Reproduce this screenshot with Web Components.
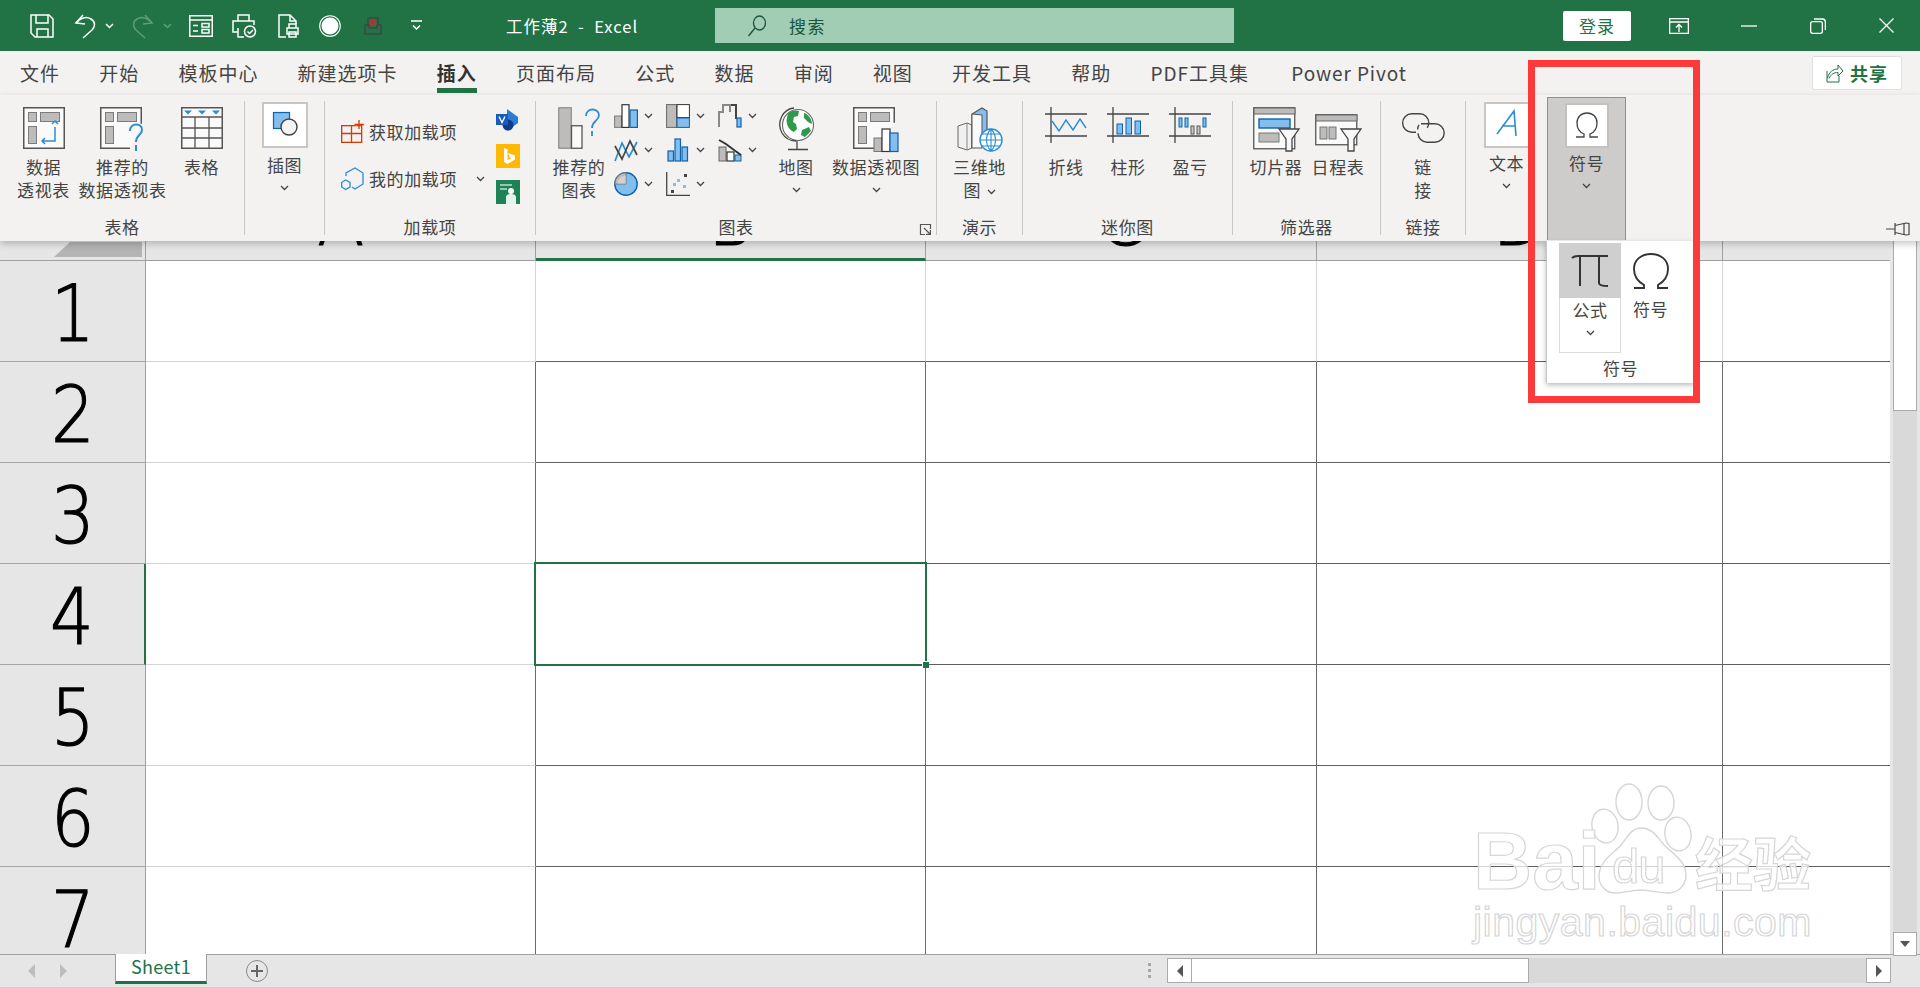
<!DOCTYPE html>
<html lang="zh">
<head>
<meta charset="utf-8">
<title>工作薄2 - Excel</title>
<style>
  html, body { margin: 0; padding: 0; height: 988px; overflow: hidden; }
  body {
    position: relative;
    width: 1920px;
    display: flex;
    flex-direction: column;
    background: #f3f2f1;
    color: #444;
    font-family: "Noto Sans CJK SC", "Liberation Sans", sans-serif;
  }
</style>
</head>
<body>
  <xl-titlebar></xl-titlebar>
  <xl-tabs></xl-tabs>
  <xl-ribbon>
    <xl-group label="表格" width="245" pad="4">
      <xl-btn w="79" label="数据|透视表"><xl-icon name="pivot"></xl-icon></xl-btn>
      <xl-btn w="79" label="推荐的|数据透视表"><xl-icon name="recpivot"></xl-icon></xl-btn>
      <xl-btn w="79" label="表格"><xl-icon name="table"></xl-icon></xl-btn>
    </xl-group>
    <xl-group label="" width="80">
      <xl-btn w="79" label="插图" chev="block" top="52" pt="1"><xl-icon name="illus"></xl-icon></xl-btn>
    </xl-group>
    <xl-group label="加载项" width="211">
      <xl-addins></xl-addins>
    </xl-group>
    <xl-group label="图表" width="401" pad="8" launcher>
      <xl-btn w="70" label="推荐的|图表"><xl-icon name="recchart"></xl-icon></xl-btn>
      <xl-chart-grid></xl-chart-grid>
      <xl-btn w="52" label="地图" chev="block"><xl-icon name="globe"></xl-icon></xl-btn>
      <xl-btn w="108" label="数据透视图" chev="block"><xl-icon name="pivotchart"></xl-icon></xl-btn>
    </xl-group>
    <xl-group label="演示" width="86">
      <xl-btn w="85" label="三维地|图" chev="inline"><xl-icon name="map3d"></xl-icon></xl-btn>
    </xl-group>
    <xl-group label="迷你图" width="210" pad="12">
      <xl-btn w="62" label="折线"><xl-icon name="sparkline"></xl-icon></xl-btn>
      <xl-btn w="62" label="柱形"><xl-icon name="sparkbar"></xl-icon></xl-btn>
      <xl-btn w="62" label="盈亏"><xl-icon name="sparkwin"></xl-icon></xl-btn>
    </xl-group>
    <xl-group label="筛选器" width="148" pad="12">
      <xl-btn w="62" label="切片器"><xl-icon name="slicer"></xl-icon></xl-btn>
      <xl-btn w="62" label="日程表"><xl-icon name="timeline"></xl-icon></xl-btn>
    </xl-group>
    <xl-group label="链接" width="85">
      <xl-btn w="84" label="链|接"><xl-icon name="link"></xl-icon></xl-btn>
    </xl-group>
    <xl-group label="" width="81" plain>
      <xl-btn w="81" label="文本" chev="block" top="50" pt="1"><xl-icon name="textbox"></xl-icon></xl-btn>
    </xl-group>
    <xl-group label="" width="79" plain>
      <xl-btn w="79" label="符号" chev="block" top="50" pt="5" active><xl-icon name="omegabox"></xl-icon></xl-btn>
    </xl-group>
  </xl-ribbon>
  <xl-sheet></xl-sheet>
  <xl-sheetbar></xl-sheetbar>
  <xl-symbol-menu></xl-symbol-menu>
  <xl-callout></xl-callout>
  <xl-watermark></xl-watermark>

<script>
const GRAY = "#bdbcbb";
const LINE = "#555";
const BLUE = "#2a8dd4";
const SKY = "#83beec";
const DEEP = "#0f62ae";

// every icon is [width, height, svg content]
const ICONS = {
  save: [24, 24, `<g fill="none" stroke="#fff" stroke-width="1.5"><path d="M1 1h18l4 4v18H5l-4-4z"/><path d="M6 1v8h12V1M7 23v-8h11v8"/></g>`],
  undo: [22, 24, `<g fill="none" stroke="#fff" stroke-width="1.5"><path d="M9 1L2 9l9 1"/><path d="M2 9c4-5 10-7 15-4 5 3 4 8 1 11l-9 8"/></g>`],
  redo: [22, 24, `<g fill="none" stroke="#5f9c7c" stroke-width="1.5"><path d="M13 1l7 8-9 1"/><path d="M20 9C16 4 10 2 5 5 0 8 1 13 4 16l9 8"/></g>`],
  chevw: [9, 6, `<path d="M1 1l3.500 3.500L8 1" fill="none" stroke="#fff" stroke-width="1.500"/>`],
  chevd: [9, 6, `<path d="M1 1l3.500 3.500L8 1" fill="none" stroke="#5f9c7c" stroke-width="1.500"/>`],
  form: [24, 22, `<g fill="none" stroke="#fff" stroke-width="1.500"><rect x=".75" y=".75" width="22.500" height="20.500"/><path d="M1 5h22M4 10.500h5M4 16h5"/><rect x="13" y="8.500" width="7" height="3.500"/><rect x="13" y="14.500" width="7" height="3.500"/></g>`],
  printchk: [24, 24, `<g fill="none" stroke="#fff" stroke-width="1.500"><path d="M6 7V1h11v6M6 18H1V7h21v4"/><path d="M6 14v9h6"/><circle cx="18" cy="17.500" r="5.500"/><path d="M15.500 17.500l2 2 3.500-3.500"/></g>`],
  preview: [21, 24, `<g fill="none" stroke="#fff" stroke-width="1.500"><path d="M8 23H1V1h11l6 6v3M12 1v6h6"/><path d="M9 14h11v6H9zM11 14v-4h7v4M11 18h7v5h-7z"/></g>`],
  circle: [22, 22, `<circle cx="11" cy="11" r="10.300" fill="none" stroke="#fff" stroke-width="1.100"/><circle cx="11" cy="11" r="8.500" fill="#fff"/>`],
  record: [18, 18, `<g fill="none" stroke="#3d4a45" stroke-width="1.500"><path d="M4 8V1h10v7"/><path d="M1 8h4v3h8V8h4v9H1z"/></g><circle cx="9" cy="6" r="2.500" fill="none" stroke="#e0202c" stroke-width="1.500"/>`],
  qatmore: [11, 11, `<path d="M0 1h11M2 5.500l3.500 3.500L9 5.500" fill="none" stroke="#fff" stroke-width="1.500"/>`],
  search: [20, 22, `<g fill="none" stroke="#17563a" stroke-width="1.300"><ellipse cx="12.500" cy="8" rx="6" ry="7"/><path d="M8 13L1.500 21"/></g>`],
  ribbonopt: [20, 16, `<g fill="none" stroke="#fff" stroke-width="1.300"><rect x=".65" y=".65" width="18.700" height="14.700"/><path d="M1 4h18M10 14V7M7 9.500L10 6.500l3 3"/></g>`],
  minimize: [16, 2, `<path d="M0 1h16" stroke="#fff" stroke-width="1.300"/>`],
  restore: [16, 16, `<g fill="none" stroke="#fff" stroke-width="1.300"><rect x=".65" y="3.650" width="11.700" height="11.700" rx="2"/><path d="M4 1h8.500A3 3 0 0 1 15.350 4v8"/></g>`],
  close: [15, 15, `<path d="M.5.500l14 14M14.500.500l-14 14" stroke="#fff" stroke-width="1.300"/>`],
  share: [18, 20, `<g fill="none" stroke="#217346" stroke-width="1"><path d="M1 8v11h12v-6"/><path d="M1.500 15C3 9 7 6 12 6V2l5 6-5 5V9.500c-4 0-7 1.500-9 6"/></g>`],
  pin: [24, 14, `<g fill="none" stroke="#444" stroke-width="1.200"><path d="M0 7h9M9 1v12M9 3.500l11-2.500 3 .5v11l-3 .5-11-2.500"/><path d="M18 1v12"/></g>`],
  launcher: [11, 11, `<g fill="none" stroke="#555" stroke-width="1.200"><path d="M10.500 5V.5H.5v10H5"/><path d="M4 4l6 6M6 10.400h4.400V6"/></g>`],

  pivot: [42, 42, `<rect x=".75" y=".75" width="40.500" height="40.500" fill="#fafafa" stroke="${LINE}" stroke-width="1.500"/><g fill="${GRAY}" stroke="#7c7c7c"><rect x="5.500" y="5.500" width="8" height="9"/><rect x="17.500" y="5.500" width="19" height="9"/><rect x="5.500" y="19.500" width="8" height="17"/></g><path d="M19 34h13V20M29 17l3-3 3 3M22 31l-3 3 3 3" fill="none" stroke="${BLUE}" stroke-width="1.500"/>`],
  recpivot: [46, 45, `<path d="M30 41.250H.75V.75h40.500v16" fill="#fafafa" stroke="${LINE}" stroke-width="1.500"/><g fill="${GRAY}" stroke="#7c7c7c"><rect x="5.500" y="5.500" width="8" height="9"/><rect x="17.500" y="5.500" width="19" height="9"/><rect x="5.500" y="19.500" width="8" height="17"/></g><path d="M30 24c0-9 13-8 12-1 0 5-6 5-6 12M36 38v6" fill="none" stroke="${BLUE}" stroke-width="2"/>`],
  table: [42, 42, `<rect x=".75" y=".75" width="40.500" height="40.500" fill="#fafafa" stroke="${LINE}" stroke-width="1.500"/><path d="M1 10h40M1 21h40M1 31h40M14 10v31M28 10v31" fill="none" stroke="${LINE}" stroke-width="1.300"/><path d="M3 3.500h8l-4 4zM17 3.500h8l-4 4zM31 3.500h8l-4 4z" fill="${BLUE}"/>`],
  illus: [46, 46, `<rect x="1" y="1" width="44" height="44" fill="#fff" stroke="#c8c6c4" stroke-width="2"/><rect x="11.500" y="10.500" width="16" height="16" fill="${SKY}" stroke="${DEEP}" stroke-width="1.200"/><circle cx="27" cy="25" r="8" fill="#f4f4f4" stroke="#444" stroke-width="1.400"/>`],
  addget: [23, 23, `<g fill="none" stroke="#d83b01" stroke-width="1.300"><rect x=".65" y="5.650" width="20" height="16.700"/><path d="M10.500 6v16M1 13.500h19"/></g><path d="M12 5.500h2.500V0h1.300v2.500H23v1.300h-7.200v1.700z" fill="#f3f2f1"/><path d="M18 0v9M13.500 4.500H23" stroke="#d83b01" stroke-width="1.300"/>`],
  addmine: [23, 23, `<g fill="none" stroke="${BLUE}" stroke-width="1.300"><path d="M5 9V6L14 1l8 5v11l-8 5-3-2"/><path d="M4.500 13L9 15.500v4.500l-4.500 2.500L.7 20v-4.500z"/></g><path d="M7 11.500" stroke="#333"/>`],
  visio: [24, 23, `<path d="M11 1l11 8v6l-11 8z" fill="#2b7cd3"/><circle cx="12" cy="17" r="5.500" fill="#0e3c8c"/><rect x="0" y="6" width="12" height="11" fill="#185abd"/><path d="M3 8.500l3 6 3-6" fill="none" stroke="#fff" stroke-width="1.400"/>`],
  bing: [24, 24, `<rect width="24" height="24" fill="#ffb900"/><path d="M8 4l3.500 1.200v11l4-2.300-2-1L12 9l7 2.500v4L11.500 20 8 18z" fill="#fff"/>`],
  people: [24, 24, `<rect width="24" height="24" fill="#1e8257"/><path d="M4 5h12M4 9h7" stroke="#bde0cd" stroke-width="1.500"/><circle cx="15" cy="11" r="3" fill="#fff"/><path d="M10 24v-7c0-2 2-3 5-3s5 1 5 3v7z" fill="#e6f3ec"/>`],

  recchart: [43, 42, `<rect x=".75" y=".75" width="12.500" height="40.500" fill="${GRAY}" stroke="#7c7c7c"/><rect x="13.500" y="18.750" width="10.500" height="22.500" fill="#fafafa" stroke="${LINE}" stroke-width="1.300"/><path d="M28 9c0-9 13-8 13-1 0 6-7 6-7 13M34 24v5" fill="none" stroke="${BLUE}" stroke-width="1.800"/>`],
  column: [24, 24, `<rect x=".6" y="12" width="7" height="11.400" fill="${GRAY}" stroke="#7c7c7c"/><rect x="8" y=".7" width="7" height="22.700" fill="#fff" stroke="#333" stroke-width="1.200"/><rect x="16" y="6" width="7.400" height="17.400" fill="${SKY}" stroke="${DEEP}" stroke-width="1.200"/>`],
  hier: [24, 24, `<rect x=".6" y=".6" width="10" height="22.800" fill="${GRAY}" stroke="#666"/><rect x="11" y=".6" width="12.400" height="13" fill="#fff" stroke="#333"/><rect x="11" y="14" width="12.400" height="9.400" fill="${SKY}" stroke="${DEEP}"/>`],
  water: [24, 24, `<path d="M1 23V8h4V1h7v7" fill="none" stroke="#888" stroke-width="2"/><path d="M13 1h5v14" fill="none" stroke="#444" stroke-width="2"/><rect x="19" y="14" width="4" height="9" fill="${SKY}" stroke="${DEEP}" stroke-width="1.200"/>`],
  line: [24, 24, `<path d="M1 23L8 5l7 14 8-15" fill="none" stroke="${BLUE}" stroke-width="1.700"/><path d="M1 8l7 13 8-18 7 14" fill="none" stroke="#444" stroke-width="1.700"/>`],
  stat: [24, 24, `<g fill="${SKY}" stroke="${DEEP}" stroke-width="1.200"><rect x="2" y="13" width="5.500" height="10"/><rect x="9" y="1" width="5.500" height="22"/><rect x="16" y="9" width="5.500" height="14"/></g>`],
  combo: [24, 24, `<rect x="1" y="9" width="7" height="14" fill="${GRAY}" stroke="#666"/><rect x="9" y="14" width="7" height="9" fill="#fff" stroke="#333" stroke-width="1.200"/><rect x="17" y="17" width="6" height="6" fill="${SKY}" stroke="${DEEP}"/><path d="M1 2l7 4 8 6 7 5" fill="none" stroke="#333" stroke-width="2"/>`],
  pie: [24, 24, `<circle cx="12" cy="12" r="11.200" fill="${SKY}" stroke="${DEEP}" stroke-width="1.400"/><path d="M12 .8A11.200 11.200 0 0 0 .8 12H12z" fill="${GRAY}" stroke="#777"/><path d="M12 3.500A8.500 8.500 0 0 0 3.500 12H12z" fill="#fafafa" opacity=".35"/>`],
  scatter: [24, 24, `<path d="M.7 0v23.300H24" fill="none" stroke="#444" stroke-width="1.300"/><g fill="${SKY}"><rect x="11" y="7" width="3" height="3"/><rect x="7" y="11" width="3" height="3"/><rect x="17" y="13" width="3" height="3"/></g><g fill="#444"><rect x="18" y="2" width="3" height="3"/><rect x="5" y="18" width="3" height="3"/></g>`],
  globe: [37, 44, `<circle cx="20" cy="18" r="15.500" fill="#fff" stroke="#666" stroke-width="1.100"/><path d="M10 6c4-3 9-3 11-2l-1 5-4 1-1 5 3 2 1 5-3 3c-4-1-9-8-7-14zM26 6c4 1 8 6 8 11l-4-2-4-4zM24 23l7-3 2 4-6 6-4-2z" fill="#2f9a4a"/><path d="M16 1C5 2-2 15 4 26c3 5 8 8 14 8M19 34v8M10 42.500h20" fill="none" stroke="#444" stroke-width="1.300"/>`],
  pivotchart: [46, 45, `<path d="M24 41.250H.75V.75h40.500v15" fill="#fafafa" stroke="${LINE}" stroke-width="1.500"/><g fill="${GRAY}" stroke="#7c7c7c"><rect x="5.500" y="5.500" width="8" height="9"/><rect x="17.500" y="5.500" width="19" height="9"/><rect x="5.500" y="19.500" width="8" height="17"/></g><rect x="21" y="31" width="8" height="13.500" fill="${GRAY}" stroke="#777"/><rect x="29" y="22" width="8" height="22.500" fill="#fff" stroke="#333" stroke-width="1.200"/><rect x="37" y="26" width="8" height="18.500" fill="${SKY}" stroke="${DEEP}" stroke-width="1.200"/>`],
  map3d: [46, 45, `<path d="M1 19l9-3 5 2v23l-5 2-9-3z" fill="#f0f0f0" stroke="#666"/><path d="M10 16v27" stroke="#888"/><path d="M15 41V7l10-6 5 3v30" fill="${SKY}" stroke="#555" stroke-width="1.200"/><path d="M15 7l10 1v33H15z" fill="#fafafa" stroke="#555"/><circle cx="34" cy="33" r="11" fill="#fff" stroke="${BLUE}" stroke-width="1.400"/><path d="M23 33h22M34 22v22M25 27h18M25 39h18M34 22c-6 6-6 16 0 22M34 22c6 6 6 16 0 22" fill="none" stroke="${BLUE}" stroke-width="1.100"/>`],

  sparkline: [42, 36, `<path d="M0 7h42M0 29h42M6 0v36" fill="none" stroke="#444" stroke-width="1.300"/><path d="M7 14l7 10 7-11 7 10 7-11 6 9" fill="none" stroke="${BLUE}" stroke-width="1.400"/>`],
  sparkbar: [42, 36, `<path d="M0 7h42M0 29h42M6 0v36" fill="none" stroke="#444" stroke-width="1.300"/><g fill="${SKY}" stroke="${DEEP}"><rect x="10" y="17" width="5.500" height="10"/><rect x="19" y="11" width="5.500" height="16"/><rect x="28" y="14" width="5.500" height="13"/></g>`],
  sparkwin: [42, 36, `<path d="M0 7h42M0 29h42M6 0v36" fill="none" stroke="#444" stroke-width="1.300"/><g fill="${SKY}" stroke="${DEEP}"><rect x="10" y="11" width="3" height="9"/><rect x="16" y="11" width="3" height="9"/><rect x="34" y="11" width="3" height="9"/></g><g fill="#ccc" stroke="#555"><rect x="22" y="19" width="3" height="8"/><rect x="28" y="19" width="3" height="8"/></g>`],
  slicer: [46, 45, `<rect x=".75" y=".75" width="41" height="41" fill="#fafafa" stroke="${LINE}" stroke-width="1.300"/><rect x="1" y="1" width="41" height="6" fill="${GRAY}" stroke="#666"/><rect x="6" y="12" width="31" height="9" fill="${SKY}" stroke="${DEEP}" stroke-width="1.400"/><rect x="6" y="26" width="20" height="9" fill="${GRAY}" stroke="#777"/><path d="M26 22h20l-7 10v12h-6V32z" fill="#f8f8f8" stroke="#444" stroke-width="1.300"/>`],
  timeline: [46, 45, `<g transform="translate(0 7)"><rect x=".75" y=".75" width="41" height="30" fill="#fafafa" stroke="${LINE}" stroke-width="1.300"/><rect x="1" y="1" width="41" height="6" fill="${GRAY}" stroke="#666"/><g fill="${GRAY}" stroke="#777"><rect x="5" y="13" width="7" height="12"/><rect x="14" y="13" width="7" height="12"/></g><path d="M26 15h20l-7 10v12h-6V25z" fill="#f8f8f8" stroke="#444" stroke-width="1.300"/></g>`],
  // two chain links, the second one passes under the first at the top left
  link: [43, 36, `<g transform="translate(0 6)" fill="none" stroke="#444" stroke-width="1.400"><path d="M14 19.200H9.800a9 9 0 0 1 0-18.400h8a9 9 0 0 1 9 9c0 2-.6 3.500-1.500 5"/><path d="M17 11.800c-1 1.500-1.300 3-1.300 4.200a9 9 0 0 0 0 .5M19 10.800h14a9 9 0 0 1 0 18.400h-8a9 9 0 0 1-9-9"/></g>`],
  textbox: [46, 46, `<rect x="1" y="1" width="44" height="44" fill="#fff" stroke="#c8c6c4" stroke-width="2"/><path d="M13 32L30 9l2 25M18 24h13" fill="none" stroke="${BLUE}" stroke-width="1.600"/>`],
  omegabox: [44, 45, `<rect x="1" y="1" width="42" height="43" fill="#fff" stroke="#c2c1c0" stroke-width="2"/><path d="M11 34h8v-3c-5-2-7-6-7-11 0-6 4-10 10-10s10 4 10 10c0 5-2 9-7 11v3h8" fill="none" stroke="#444" stroke-width="1.300"/>`],
  pi: [36, 34, `<path d="M0 4c2-2 4-2 6-2h30M8 2v30M27 2v27c0 2 3 3 9 3" fill="none" stroke="#333" stroke-width="2"/>`],
  omega: [36, 36, `<path d="M1 35h10v-3C4 28 1 22 1 16 1 7 8 1 18 1s17 6 17 15c0 6-3 12-10 16v3h10" fill="none" stroke="#333" stroke-width="1.900"/>`]
};

class XlIcon extends HTMLElement {
  connectedCallback() {
    const [w, h, body] = ICONS[this.getAttribute("name")];
    const root = this.shadowRoot || this.attachShadow({ mode: "open" });
    root.innerHTML = `
      <style>
        :host { display: block; width: ${w}px; height: ${h}px; flex: none; }
        svg { display: block; overflow: visible; }
      </style>
      <svg width="${w}" height="${h}" viewBox="0 0 ${w} ${h}">${body}</svg>`;
  }
}

// small grey chevron used under ribbon labels
const CHEV = `<svg width="9" height="6" viewBox="0 0 9 6"><path d="M1 1l3.500 3.500L8 1" fill="none" stroke="#444" stroke-width="1.300"/></svg>`;

class XlTitlebar extends HTMLElement {
  connectedCallback() {
    const qat = [
      ["save", 30], ["undo", 20], ["chevw", 9], ["redo", 18], ["chevd", 9], ["form", 17],
      ["printchk", 19], ["preview", 22], ["circle", 20], ["record", 23], ["qatmore", 29]
    ].map(([n, m]) => `<xl-icon name="${n}" style="margin-left:${m}px"></xl-icon>`).join("");
    this.attachShadow({ mode: "open" }).innerHTML = `
      <style>
        :host { display: flex; align-items: center; height: 51px; flex: none; background: #217346; color: #fff; }
        .title { width: 209px; margin-left: 84px; font-size: 16.500px; letter-spacing: 1px; white-space: pre; }
        .search {
          width: 519px; height: 35px; box-sizing: border-box; padding-left: 32px;
          display: flex; align-items: center; gap: 22px;
          background: #a0cdb4; color: #17563a; font-size: 17px; letter-spacing: 1.500px;
        }
        .login {
          width: 68px; height: 30px; margin-left: 329px; border-radius: 2px; background: #fff;
          color: #217346; font-size: 17px; letter-spacing: 1px; text-align: center; line-height: 30px;
        }
      </style>
      ${qat}
      <div class="title">工作薄2  -  Excel</div>
      <div class="search"><xl-icon name="search"></xl-icon><span>搜索</span></div>
      <div class="login">登录</div>
      <xl-icon name="ribbonopt" style="margin-left:38px"></xl-icon>
      <xl-icon name="minimize" style="margin-left:52px"></xl-icon>
      <xl-icon name="restore" style="margin-left:53px"></xl-icon>
      <xl-icon name="close" style="margin-left:53px"></xl-icon>`;
  }
}

class XlTabs extends HTMLElement {
  connectedCallback() {
    const names = ["文件", "开始", "模板中心", "新建选项卡", "插入", "页面布局", "公式", "数据", "审阅", "视图", "开发工具", "帮助", "PDF工具集", "Power Pivot"];
    this.attachShadow({ mode: "open" }).innerHTML = `
      <style>
        :host { display: flex; gap: 39.2px; height: 44px; flex: none; box-sizing: border-box; padding-left: 20px; position: relative; }
        .tab { position: relative; font-size: 19px; letter-spacing: 1px; line-height: 44px; white-space: nowrap; color: #444; }
        .on { font-weight: 700; color: #333; }
        .on::after { content: ""; position: absolute; left: 0; right: 0; bottom: 2px; height: 5px; background: #217346; }
        .latin { letter-spacing: .9px; margin-left: 3px; }
        .share {
          position: absolute; left: 1812px; top: 5px; width: 90px; height: 34px; box-sizing: border-box;
          display: flex; align-items: center; justify-content: center; gap: 6px;
          background: #fff; border: 1px solid #e1dfdd; border-radius: 2px;
          color: #217346; font-size: 18px; font-weight: 700; letter-spacing: 1px;
        }
      </style>
      ${names.map(n => `<div class="tab${n === "插入" ? " on" : ""}${n === "Power Pivot" ? " latin" : ""}">${n}</div>`).join("")}
      <div class="share"><xl-icon name="share"></xl-icon><span>共享</span></div>`;
  }
}

class XlRibbon extends HTMLElement {
  connectedCallback() {
    this.attachShadow({ mode: "open" }).innerHTML = `
      <style>
        :host {
          display: flex; height: 146px; flex: none; box-sizing: border-box; padding-top: 6px;
          position: relative; z-index: 2; background: #f3f2f1; box-shadow: 0 3px 7px rgba(0,0,0,.22);
        }
        .pin { position: absolute; left: 1886px; top: 127px; }
      </style>
      <slot></slot>
      <xl-icon class="pin" name="pin"></xl-icon>`;
  }
}

class XlGroup extends HTMLElement {
  connectedCallback() {
    const plain = this.hasAttribute("plain");
    this.attachShadow({ mode: "open" }).innerHTML = `
      <style>
        :host {
          display: flex; flex-direction: column; flex: none; position: relative; box-sizing: border-box;
          width: ${this.getAttribute("width")}px; height: 134px;
          ${plain ? "" : "border-right: 1px solid #c8c6c4;"}
        }
        .body { flex: 1; display: flex; align-items: flex-start; min-height: 0; padding-left: ${this.getAttribute("pad") || 0}px; }
        .label { height: 18px; line-height: 20px; font-size: 17px; letter-spacing: .6px; text-align: center; color: #444; }
        .launcher { position: absolute; right: 5px; bottom: 0; }
      </style>
      <div class="body"><slot></slot></div>
      <div class="label">${this.getAttribute("label") || ""}</div>
      ${this.hasAttribute("launcher") ? `<xl-icon class="launcher" name="launcher"></xl-icon>` : ""}`;
  }
}

class XlBtn extends HTMLElement {
  connectedCallback() {
    const lines = this.getAttribute("label").split("|");
    const chev = this.getAttribute("chev");
    const active = this.hasAttribute("active");
    const html = lines.map((l, i) => {
      const tail = chev === "inline" && i === lines.length - 1 ? ` <span class="ic">${CHEV}</span>` : "";
      return `<div class="ln">${l}${tail}</div>`;
    }).join("");
    this.attachShadow({ mode: "open" }).innerHTML = `
      <style>
        :host {
          display: flex; flex-direction: column; align-items: center; flex: none; box-sizing: border-box;
          width: ${this.getAttribute("w")}px;
          ${active ? "height: 143px; margin-top: -4px; background: #cdcccb; border: 1px solid #8f8f8f; border-bottom: 0;" : ""}
        }
        .icon { height: ${(+this.getAttribute("top") || 54) + (active ? 3 : 0)}px; display: flex; align-items: flex-start; justify-content: center; padding-top: ${this.getAttribute("pt") || 6}px; box-sizing: border-box; flex: none; }
        .ln { font-size: 17px; letter-spacing: .6px; line-height: 23px; height: 23px; white-space: nowrap; color: #444; }
        .ic { display: inline-block; vertical-align: 2px; margin-left: 1px; }
        .ic svg { display: block; }
        .chev { height: 23px; display: flex; align-items: center; }
        .chev svg { display: block; }
      </style>
      <div class="icon"><slot></slot></div>
      ${html}
      ${chev === "block" ? `<div class="chev">${CHEV}</div>` : ""}`;
  }
}

class XlAddins extends HTMLElement {
  connectedCallback() {
    this.attachShadow({ mode: "open" }).innerHTML = `
      <style>
        :host { display: grid; grid-template-columns: 155px 24px; padding: 7px 0 0 16px; }
        .rows { display: flex; flex-direction: column; padding-top: 12px; gap: 24px; }
        .row { display: flex; align-items: center; gap: 5px; height: 23px; font-size: 17px; letter-spacing: .6px; white-space: nowrap; }
        .row svg { display: block; margin-left: 14px; }
        .side { display: flex; flex-direction: column; gap: 12.500px; }
      </style>
      <div class="rows">
        <div class="row"><xl-icon name="addget"></xl-icon><span>获取加载项</span></div>
        <div class="row"><xl-icon name="addmine"></xl-icon><span>我的加载项</span>${CHEV}</div>
      </div>
      <div class="side">
        <xl-icon name="visio"></xl-icon>
        <xl-icon name="bing"></xl-icon>
        <xl-icon name="people"></xl-icon>
      </div>`;
  }
}

class XlChartGrid extends HTMLElement {
  connectedCallback() {
    const items = ["column", "hier", "water", "line", "stat", "combo", "pie", "scatter"];
    this.attachShadow({ mode: "open" }).innerHTML = `
      <style>
        :host { display: grid; grid-template-columns: repeat(3, 52px); grid-auto-rows: 34px; padding-top: 3px; flex: none; }
        .it { display: flex; align-items: center; gap: 6px; height: 24px; }
        .it svg { display: block; }
      </style>
      ${items.map(n => `<div class="it"><xl-icon name="${n}"></xl-icon>${CHEV}</div>`).join("")}`;
  }
}

class XlSheet extends HTMLElement {
  connectedCallback() {
    const colw = [390, 390, 391, 406, 168];
    const letters = ["A", "B", "C", "D", ""];
    let cells = `<div class="corner"><i></i></div>`;
    letters.forEach((l, c) => {
      cells += `<div class="colh${c === 1 ? " sel" : ""}"><span>${l}</span></div>`;
    });
    for (let r = 1; r <= 7; r++) {
      cells += `<div class="rowh${r === 4 ? " sel" : ""}"><span>${r}</span></div>`;
      for (let c = 0; c < 5; c++) {
        let cls = "cell";
        // the bordered block starts at column B; row 1 only has its lower edge
        if (c > 0) cls += " hb";
        if (r > 1 && c < 4) cls += " vb";
        if (c === 4) cls += " end";
        cells += `<div class="${cls}">${r === 4 && c === 1 ? `<div class="cursor"><b></b></div>` : ""}</div>`;
      }
    }
    this.attachShadow({ mode: "open" }).innerHTML = `
      <style>
        :host { display: flex; height: 713px; flex: none; position: relative; background: #e6e6e6; }
        .grid {
          width: 1890px; flex: none; overflow: hidden; background: #fff;
          display: grid; grid-template-columns: 146px ${colw.map(w => w + "px").join(" ")};
          grid-template-rows: 20px repeat(7, 101px);
        }
        .corner { background: #e6e6e6; border-right: 1px solid #9f9f9f; border-bottom: 1px solid #9f9f9f; position: relative; box-sizing: border-box; }
        .corner i { position: absolute; left: 54px; top: 1px; width: 88px; height: 15px; background: #b4b4b4; clip-path: polygon(100% 0, 100% 100%, 0 100%, 16px 0); }
        .colh {
          background: #e6e6e6; border-right: 1px solid #9f9f9f; border-bottom: 1px solid #9f9f9f; box-sizing: border-box;
          overflow: hidden; display: flex; justify-content: center; align-items: flex-end;
          font: 200 78px/78px "DejaVu Sans", sans-serif; color: #000; -webkit-text-stroke: 1.200px #000;
        }
        .colh span, .rowh span { display: inline-block; transform: scaleX(.88); }
        .colh span { margin-bottom: 3px; }
        .colh.sel span { margin-bottom: 1px; }
        .colh:last-child { border-right: 0; }
        .colh.sel { border-bottom: 3px solid #217346; }
        .rowh {
          background: #e6e6e6; border-right: 1px solid #9f9f9f; border-bottom: 1px solid #a6a6a6; box-sizing: border-box;
          display: flex; align-items: center; justify-content: center; padding-top: 6px; overflow: hidden;
          font: 200 78px/78px "DejaVu Sans", sans-serif; color: #000; -webkit-text-stroke: 1.200px #000;
        }
        .rowh.sel { border-right: 2px solid #217346; }
        .cell { position: relative; box-sizing: border-box; border-right: 1px solid #d4d4d4; border-bottom: 1px solid #d4d4d4; }
        .hb { border-bottom-color: #5f5f5f; }
        .vb { border-right-color: #6a6a6a; }
        .end { border-right: 1px solid #9f9f9f; }
        .cursor { position: absolute; left: -2px; top: -2px; right: -2px; bottom: -2px; border: 2px solid #217346; z-index: 1; }
        .cursor b { position: absolute; right: -4px; bottom: -4px; width: 6px; height: 6px; background: #217346; border: 1px solid #fff; border-width: 1px 0 0 1px; }
        .vscroll { flex: none; width: 30px; height: 715px; box-sizing: border-box; padding-left: 3px; display: flex; flex-direction: column; position: relative; z-index: 1; }
        .thumb { width: 24px; height: 170px; box-sizing: border-box; background: #fff; border: 1px solid #ababab; border-top: 0; flex: none; }
        .track { width: 24px; flex: 1; background: #d9d9d9; }
        .down { width: 24px; height: 24px; box-sizing: border-box; background: #fff; border: 1px solid #ababab; flex: none; display: flex; align-items: center; justify-content: center; }
        .down::after { content: ""; border: 5px solid transparent; border-top: 6px solid #555; border-bottom: 0; }
      </style>
      <div class="grid">${cells}</div>
      <div class="vscroll"><div class="thumb"></div><div class="track"></div><div class="down"></div></div>`;
  }
}

class XlSheetbar extends HTMLElement {
  connectedCallback() {
    this.attachShadow({ mode: "open" }).innerHTML = `
      <style>
        :host {
          display: flex; align-items: flex-start; height: 34px; flex: none; box-sizing: border-box; position: relative;
          background: #e6e6e6; border-top: 1px solid #9f9f9f; border-bottom: 1px solid #d0d0d0;
        }
        .nav { display: flex; gap: 25px; width: 115px; box-sizing: border-box; padding: 9px 0 0 28px; flex: none; }
        .nav i { width: 0; height: 0; border: 7px solid transparent; }
        .nav i:first-child { border-right: 7px solid #bdbdbd; border-left: 0; }
        .nav i:last-child { border-left: 7px solid #bdbdbd; border-right: 0; }
        .sheet {
          width: 92px; height: 30px; box-sizing: border-box; margin-top: -1px; flex: none; background: #fff;
          border: 1px solid #9f9f9f; border-top: 0; border-bottom: 3px solid #217346;
          color: #217346; font-size: 18px; line-height: 25px; text-align: center; letter-spacing: .3px;
        }
        .add {
          width: 22px; height: 22px; margin: 5px 0 0 39px; box-sizing: border-box; flex: none; border-radius: 50%;
          border: 1.500px solid #8a8a8a; position: relative;
        }
        .add::before, .add::after { content: ""; position: absolute; background: #666; }
        .add::before { left: 4px; right: 4px; top: 8.500px; height: 2px; }
        .add::after { top: 4px; bottom: 4px; left: 8.500px; width: 2px; }
        .dots { margin: 8px 0 0 880px; width: 3px; height: 15px; flex: none; background: repeating-linear-gradient(#a6a6a6 0 3px, transparent 3px 6px); }
        .hs { margin: 3px 0 0 16px; display: flex; width: 724px; height: 25px; flex: none; background: #d9d9d9; }
        .btn { width: 25px; box-sizing: border-box; background: #fff; border: 1px solid #ababab; flex: none; display: flex; align-items: center; justify-content: center; }
        .btn.l::after { content: ""; border: 6px solid transparent; border-right: 6px solid #555; border-left: 0; }
        .btn.r::after { content: ""; border: 6px solid transparent; border-left: 6px solid #555; border-right: 0; }
        .hthumb { width: 337px; box-sizing: border-box; background: #fff; border: 1px solid #ababab; border-left: 0; flex: none; }
        .gap { flex: 1; }
      </style>
      <div class="nav"><i></i><i></i></div>
      <div class="sheet">Sheet1</div>
      <div class="add"></div>
      <div class="dots"></div>
      <div class="hs"><div class="btn l"></div><div class="hthumb"></div><div class="gap"></div><div class="btn r"></div></div>`;
  }
}

// dropdown of the 符号 button, lies over the sheet
class XlSymbolMenu extends HTMLElement {
  connectedCallback() {
    this.attachShadow({ mode: "open" }).innerHTML = `
      <style>
        :host {
          position: absolute; left: 1546px; top: 241px; width: 148px; height: 142px; z-index: 3; box-sizing: border-box;
          background: #fff; border-left: 1px solid #c8c6c4; box-shadow: 0 2px 5px rgba(0,0,0,.28);
          display: grid; grid-template-columns: 62px 1fr; grid-template-rows: 110px 1fr; padding: 2px 0 0 12px;
          font-size: 17px; letter-spacing: .6px; color: #444;
        }
        .eq { border: 1px solid #dcdcdc; border-top: 0; box-sizing: border-box; display: flex; flex-direction: column; align-items: center; }
        .eq .top { width: 62px; height: 55px; background: #cfcfcf; margin-left: -1px; margin-right: -1px; display: flex; justify-content: center; padding-top: 11px; box-sizing: border-box; flex: none; }
        .eq .tx { line-height: 24px; }
        .eq .ch { height: 22px; display: flex; align-items: center; }
        .eq .ch svg { display: block; }
        .sym { display: flex; flex-direction: column; align-items: center; padding: 10px 14px 0 0; }
        .sym .tx { line-height: 24px; margin-top: 8px; }
        .lab { grid-column: 1 / -1; text-align: center; line-height: 30px; margin-left: -12px; }
      </style>
      <div class="eq"><div class="top"><xl-icon name="pi"></xl-icon></div><div class="tx">公式</div><div class="ch">${CHEV}</div></div>
      <div class="sym"><xl-icon name="omega"></xl-icon><div class="tx">符号</div></div>
      <div class="lab">符号</div>`;
  }
}

// red annotation frame drawn on top of the screenshot
class XlCallout extends HTMLElement {
  connectedCallback() {
    this.attachShadow({ mode: "open" }).innerHTML = `
      <style>
        :host {
          position: absolute; left: 1528px; top: 60px; width: 172px; height: 343px; z-index: 4;
          box-sizing: border-box; border: 7px solid #fc3a3a; pointer-events: none;
        }
      </style>`;
  }
}

class XlWatermark extends HTMLElement {
  connectedCallback() {
    this.attachShadow({ mode: "open" }).innerHTML = `
      <style>
        :host { position: absolute; left: 1470px; top: 780px; width: 350px; height: 170px; z-index: 1; pointer-events: none; }
        svg { position: absolute; left: 0; top: 0; overflow: visible; }
        .t {
          position: absolute; white-space: nowrap; color: rgba(255,255,255,.75);
          -webkit-text-stroke: 1.200px #d6d6d6; font-family: "Liberation Sans", "Noto Sans CJK SC", sans-serif;
        }
        .bai { left: 3px; top: 40px; font-size: 82px; line-height: 82px; font-weight: 700; }
        .du { left: 142px; top: 61px; font-size: 49px; line-height: 50px; letter-spacing: -1px; }
        .jy { left: 225px; top: 50px; font-size: 58px; line-height: 62px; font-family: "Noto Sans CJK SC", sans-serif; font-weight: 700; }
        .url { left: 3px; top: 118px; font-size: 41px; line-height: 48px; letter-spacing: .5px; }
      </style>
      <svg width="350" height="170" viewBox="0 0 350 170" fill="rgba(255,255,255,.7)" stroke="#d6d6d6" stroke-width="1.400">
        <ellipse cx="159" cy="22" rx="13" ry="18"/>
        <ellipse cx="191" cy="23" rx="13" ry="17"/>
        <ellipse cx="135" cy="46" rx="13" ry="17" transform="rotate(-10 135 46)"/>
        <ellipse cx="208" cy="54" rx="13" ry="17" transform="rotate(-10 208 54)"/>
        <path d="M171 48c-10 0-14 10-20 17-7 8-22 16-22 31 0 11 8 17 17 17 9 0 14-3 25-3s17 3 26 3c10 0 19-6 19-18 0-14-14-22-22-30-6-7-11-17-23-17z"/>
      </svg>
      <div class="t bai">Bai</div>
      <div class="t du">du</div>
      <div class="t jy">经验</div>
      <div class="t url">jingyan.baidu.com</div>`;
  }
}

customElements.define("xl-icon", XlIcon);
customElements.define("xl-titlebar", XlTitlebar);
customElements.define("xl-tabs", XlTabs);
customElements.define("xl-ribbon", XlRibbon);
customElements.define("xl-group", XlGroup);
customElements.define("xl-btn", XlBtn);
customElements.define("xl-addins", XlAddins);
customElements.define("xl-chart-grid", XlChartGrid);
customElements.define("xl-sheet", XlSheet);
customElements.define("xl-sheetbar", XlSheetbar);
customElements.define("xl-symbol-menu", XlSymbolMenu);
customElements.define("xl-callout", XlCallout);
customElements.define("xl-watermark", XlWatermark);
</script>
</body>
</html>
